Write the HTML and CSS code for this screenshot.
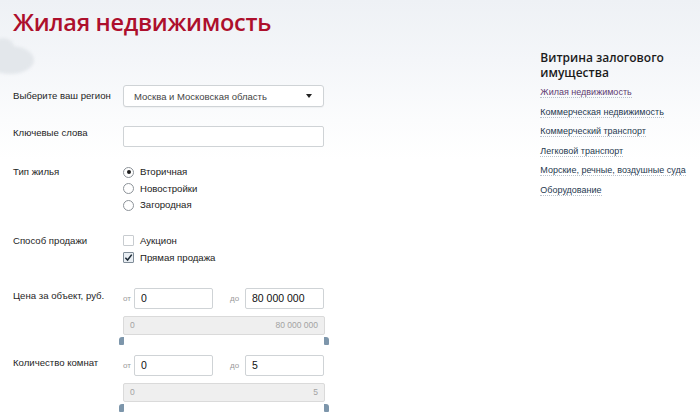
FILE: index.html
```html
<!DOCTYPE html>
<html lang="ru">
<head>
<meta charset="utf-8">
<title>Жилая недвижимость</title>
<link rel="stylesheet" href="styles.css">
</head>
<body>
<div class="page">
  <div class="cloud"></div>
  <h1 class="title">Жилая недвижимость</h1>
  <div class="layout">
    <form class="form">
      <div class="row row-region">
        <div class="label">Выберите ваш регион</div>
        <div class="select">
          <span>Москва и Московская область</span>
          <span class="caret"></span>
        </div>
      </div>
      <div class="row row-keywords">
        <div class="label">Ключевые слова</div>
        <div class="input wide"></div>
      </div>
      <div class="row row-type">
        <div class="label">Тип жилья</div>
        <div class="options">
          <div class="opt"><span class="radio checked"></span>Вторичная</div>
          <div class="opt"><span class="radio"></span>Новостройки</div>
          <div class="opt"><span class="radio"></span>Загородная</div>
        </div>
      </div>
      <div class="row row-sale">
        <div class="label">Способ продажи</div>
        <div class="options checks">
          <div class="opt"><span class="check"></span>Аукцион</div>
          <div class="opt"><span class="check checked"><svg viewBox="0 0 10 10" width="9" height="9"><path d="M1.5 5.2 L4 7.8 L8.6 1.8" fill="none" stroke="#1d2a36" stroke-width="1.7"/></svg></span>Прямая продажа</div>
        </div>
      </div>
      <div class="row row-range">
        <div class="label">Цена за объект, руб.</div>
        <div class="range">
          <div class="range-inputs">
            <span class="pre">от</span><div class="input small">0</div>
            <span class="pre pre-to">до</span><div class="input small">80 000 000</div>
          </div>
          <div class="slider"><span>0</span><span>80 000 000</span></div>
          <div class="handles"><span class="handle left"></span><span class="handle right"></span></div>
        </div>
      </div>
      <div class="row row-range">
        <div class="label">Количество комнат</div>
        <div class="range">
          <div class="range-inputs">
            <span class="pre">от</span><div class="input small">0</div>
            <span class="pre pre-to">до</span><div class="input small">5</div>
          </div>
          <div class="slider"><span>0</span><span>5</span></div>
          <div class="handles"><span class="handle left"></span><span class="handle right"></span></div>
        </div>
      </div>
    </form>
    <aside class="side">
      <h2 class="side-title">Витрина залогового имущества</h2>
      <ul class="side-links">
        <li><a class="visited" href="#">Жилая недвижимость</a></li>
        <li><a href="#">Коммерческая недвижимость</a></li>
        <li><a href="#">Коммерческий транспорт</a></li>
        <li><a href="#">Легковой транспорт</a></li>
        <li><a href="#">Морские, речные, воздушные суда</a></li>
        <li><a href="#">Оборудование</a></li>
      </ul>
    </aside>
  </div>
</div>
</body>
</html>
```
FILE: styles.css
```css
html, body {
  margin: 0;
  padding: 0;
}
body {
  width: 700px;
  height: 420px;
  overflow: hidden;
  font-family: "Liberation Sans", Arial, sans-serif;
  color: #222;
  background: linear-gradient(to bottom, #eef1f5 0px, #f4f6f9 60px, #fbfcfd 120px, #ffffff 160px);
}
.page {
  position: relative;
  padding: 0 0 0 13px;
}
.cloud {
  position: absolute;
  left: -14px;
  top: 46px;
  width: 48px;
  height: 28px;
  border-radius: 50%;
  background: #e3e7eb;
  filter: blur(1.5px);
}
.cloud::before {
  content: "";
  position: absolute;
  left: 6px;
  top: -8px;
  width: 22px;
  height: 18px;
  border-radius: 50%;
  background: #e3e7eb;
}
.title {
  position: relative;
  margin: 0;
  padding-top: 7px;
  font-family: "Open Sans", sans-serif;
  font-weight: 600;
  font-size: 23.5px;
  line-height: 30px;
  color: #ad0f2c;
  letter-spacing: -0.3px;
}
.layout {
  display: flex;
}
.form {
  width: 320px;
  padding-top: 48px;
}
.row {
  display: flex;
}
.label {
  width: 110px;
  flex: none;
  font-size: 9.6px;
  line-height: 12px;
  color: #1e1e1e;
}
.row-region {
  align-items: center;
  margin-bottom: 19px;
}
.select {
  box-sizing: border-box;
  width: 201px;
  height: 22px;
  border: 1px solid #cfd3d6;
  border-radius: 3px;
  background: #fff;
  display: flex;
  align-items: center;
  justify-content: space-between;
  padding: 0 11px 0 10px;
  font-size: 9.5px;
  color: #444;
  box-shadow: 0 1px 1px rgba(0,0,0,0.04);
}
.caret {
  width: 0;
  height: 0;
  border-left: 3px solid transparent;
  border-right: 3px solid transparent;
  border-top: 4px solid #222;
}
.row-keywords {
  margin-bottom: 17px;
}
.row-keywords .label {
  padding-top: 1px;
}
.input {
  box-sizing: border-box;
  height: 21px;
  border: 1px solid #cfd3d6;
  border-radius: 2px;
  background: #fff;
  font-size: 10.5px;
  line-height: 19px;
  padding-left: 6px;
  color: #111;
}
.input.wide {
  width: 201px;
}
.input.small {
  width: 79px;
}
.options {
  font-size: 9.6px;
  line-height: 16.5px;
  color: #222;
}
.row-type .label, .row-sale .label {
  line-height: 16.5px;
}
.row-type {
  margin-bottom: 18px;
}
.opt {
  display: flex;
  align-items: center;
}
.radio {
  box-sizing: border-box;
  width: 11px;
  height: 11px;
  border: 1px solid #8d9399;
  border-radius: 50%;
  margin-right: 6px;
  background: #fff;
  display: flex;
  align-items: center;
  justify-content: center;
}
.radio.checked::after {
  content: "";
  width: 4px;
  height: 4px;
  border-radius: 50%;
  background: #1d1d1d;
}
.checks {
  line-height: 17px;
}
.row-sale .label {
  line-height: 17px;
}
.row-sale {
  margin-bottom: 22px;
}
.check {
  box-sizing: border-box;
  width: 11px;
  height: 11px;
  border: 1px solid #c8ccd0;
  border-radius: 1px;
  margin-right: 6px;
  background: #fff;
  display: flex;
  align-items: center;
  justify-content: center;
}
.check.checked {
  border-color: #7f8c98;
  background: #e9eef3;
}
.row-range {
  margin-bottom: 8px;
}
.row-range .label {
  padding-top: 2px;
}
.range {
  width: 202px;
}
.range-inputs {
  display: flex;
  align-items: center;
}
.pre {
  width: 11px;
  font-size: 8px;
  color: #9a9a9a;
}
.pre-to {
  width: 15px;
  margin-left: 17px;
}
.slider {
  box-sizing: border-box;
  margin-top: 7px;
  height: 19px;
  border: 1px solid #dadada;
  border-radius: 2px;
  background: #efefef;
  display: flex;
  justify-content: space-between;
  align-items: center;
  padding: 0 6px;
  font-size: 8.5px;
  color: #a3a3a3;
}
.handles {
  display: flex;
  justify-content: space-between;
  height: 10px;
  margin: 2px -4px 0 -4px;
}
.handle {
  width: 5px;
  height: 8px;
  background: #7d96ab;
}
.handle.left {
  border-radius: 3px 0 1px 1px;
}
.handle.right {
  border-radius: 0 3px 1px 1px;
}
.side {
  margin-left: 208px;
  padding-top: 14px;
  width: 160px;
}
.side-title {
  margin: 0 0 6px 0;
  font-family: "Open Sans", sans-serif;
  font-weight: 600;
  font-size: 12px;
  line-height: 14.5px;
  color: #1b1b1b;
}
.side-links {
  list-style: none;
  margin: 0;
  padding: 0;
}
.side-links li {
  height: 19.5px;
  font-size: 9px;
  line-height: 12px;
}
.side-links a {
  color: #26394f;
  text-decoration: none;
  border-bottom: 1px dotted #b9c2cc;
}
.side-links a.visited {
  color: #5f3c72;
}
```
